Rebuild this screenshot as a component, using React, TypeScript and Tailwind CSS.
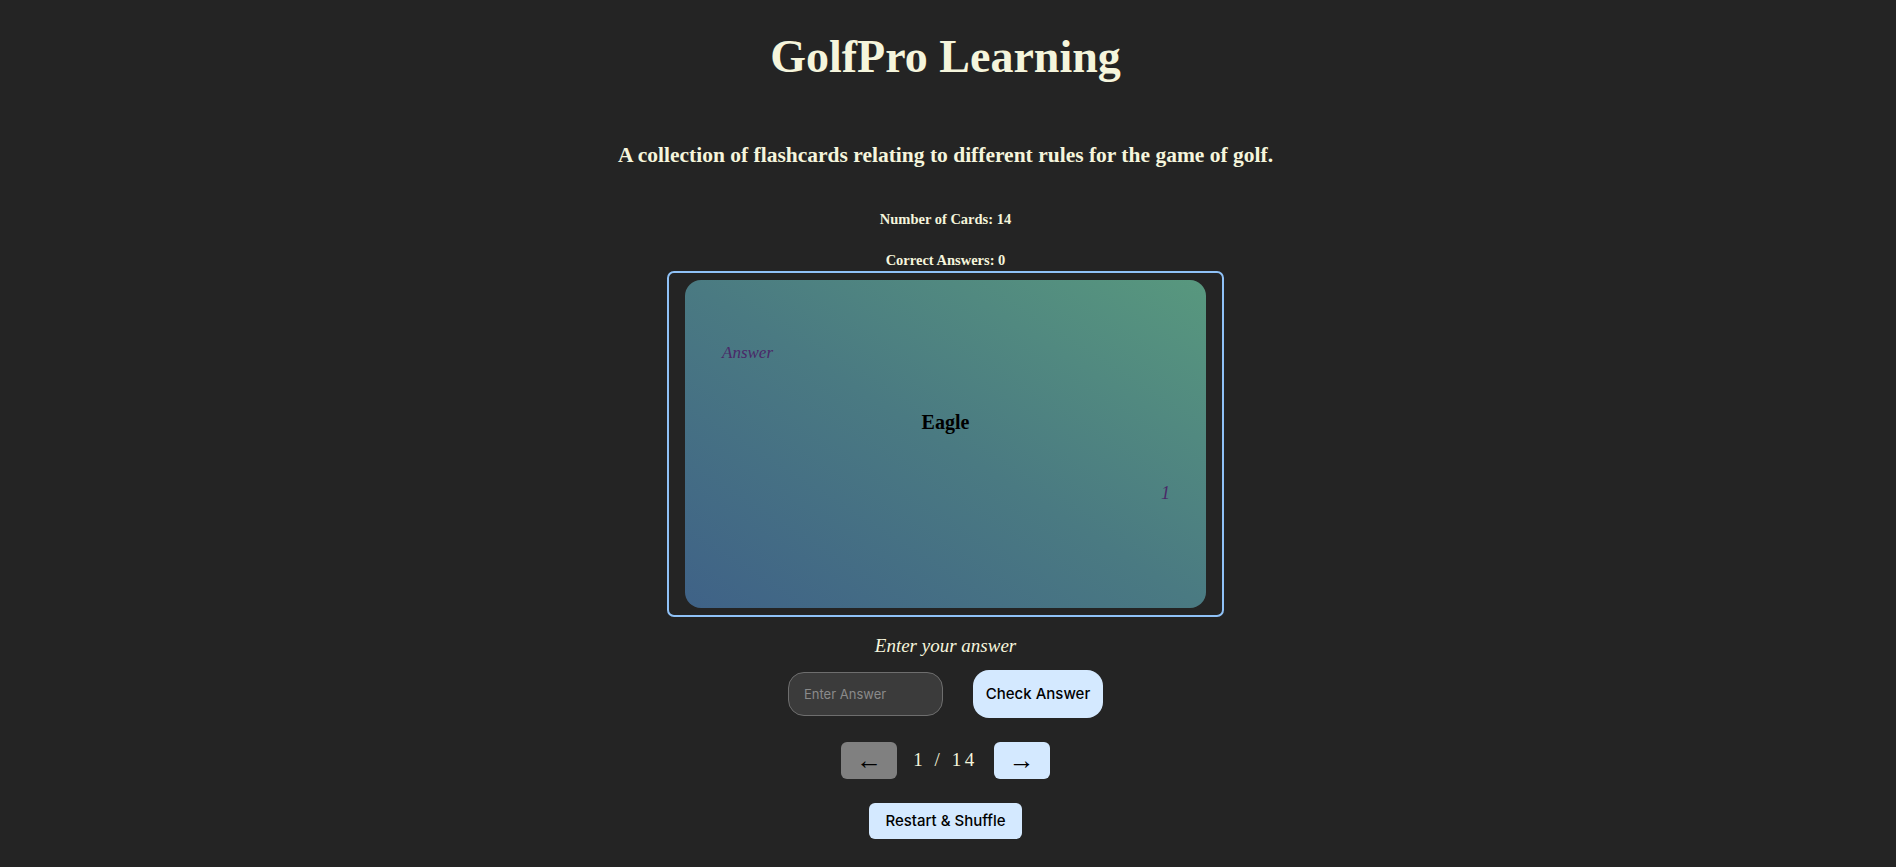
import { useState } from "react"

const CARDS = [
  { question: "Eagle", answer: "2 under par" },
]

export default function App() {
  const [guess, setGuess] = useState("")
  const [index] = useState(0)
  const card = CARDS[index]

  return (
    <div className="min-h-screen w-full bg-[#242424] pr-[5px] font-['Liberation_Serif',serif] text-[#f5f5dc]">
      <div className="flex flex-col items-center pt-[29px]">
        <h1 className="text-[46px] font-bold leading-[56px]">GolfPro Learning</h1>
        <h3 className="mt-[55px] text-[21.5px] font-bold leading-[30px]">
          A collection of flashcards relating to different rules for the game of golf.
        </h3>
        <h4 className="mt-[39px] text-[14.5px] font-bold leading-[20px]">Number of Cards: 14</h4>
        <h4 className="mt-[21px] text-[14.5px] font-bold leading-[20px]">Correct Answers: 0</h4>

        {/* Card */}
        <div className="mt-[1px] w-[557px] rounded-[7px] border-2 border-[#90c2f7] px-[16px] py-[7px]">
          <div className="flex h-[328px] w-full flex-col rounded-[16px] bg-[linear-gradient(to_top_right,#3f6287,#4a7a82_50%,#58987e)] pt-[61px]">
            <p className="self-start pl-[37px] text-[17px] italic leading-[24px] text-[#4a2868]">Answer</p>
            <p className="mt-[43px] self-center text-[20px] font-bold leading-[28px] text-black">{card.question}</p>
            <p className="mt-[45px] self-end pr-[36px] text-[18px] italic leading-[24px] text-[#4a2868]">1</p>
          </div>
        </div>

        <p className="mt-[17px] text-[19px] italic leading-[24px]">Enter your answer</p>

        <div className="mt-[12px] flex items-center gap-[30px] font-['Inter',sans-serif]">
          <input
            type="text"
            value={guess}
            onChange={(e) => setGuess(e.target.value)}
            placeholder="Enter Answer"
            className="h-[44px] w-[155px] rounded-[16px] border border-[#6e6e6e] bg-[#3b3b3b] px-[15px] text-[13px] text-white outline-none placeholder:text-[#8a8a8a]"
          />
          <button className="h-[48px] w-[130px] rounded-[16px] bg-[#d4e9ff] text-[15px] font-medium text-black">
            Check Answer
          </button>
        </div>

        <div className="mt-[24px] flex items-center gap-4">
          <button className="flex h-[37px] w-[56px] items-center justify-center rounded-[6px] bg-[#808080] text-[26px] leading-none text-black">←</button>
          <span className="text-[19px] tracking-[3.5px]">1 / 14</span>
          <button className="flex h-[37px] w-[56px] items-center justify-center rounded-[6px] bg-[#d4e9ff] text-[26px] leading-none text-black">→</button>
        </div>

        <button className="mt-[24px] h-[36px] w-[153px] rounded-[6px] bg-[#d4e9ff] font-['Inter',sans-serif] text-[15px] font-medium text-black">
          Restart &amp; Shuffle
        </button>
      </div>
    </div>
  )
}
